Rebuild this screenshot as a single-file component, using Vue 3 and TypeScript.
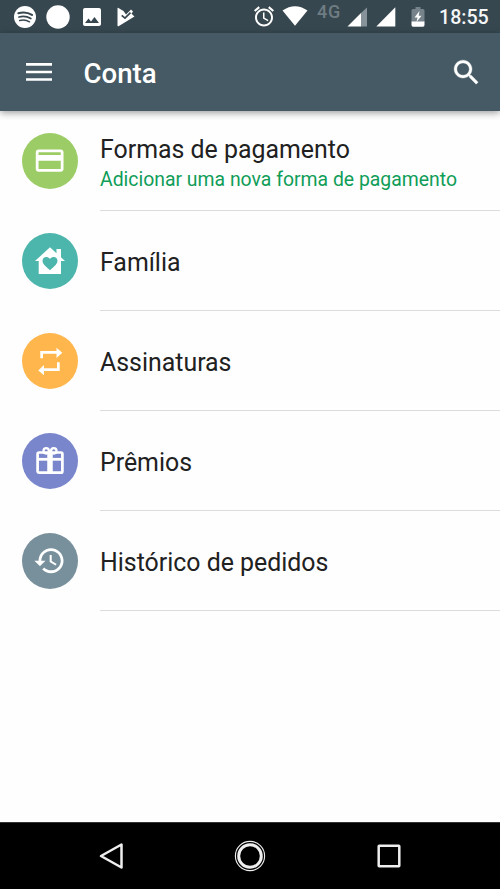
<script setup lang="ts">
type IconName = 'card' | 'family' | 'repeat' | 'gift' | 'history'

interface AccountItem {
  icon: IconName
  title: string
  subtitle?: string
}

const items: AccountItem[] = [
  { icon: 'card', title: 'Formas de pagamento', subtitle: 'Adicionar uma nova forma de pagamento' },
  { icon: 'family', title: 'Família' },
  { icon: 'repeat', title: 'Assinaturas' },
  { icon: 'gift', title: 'Prêmios' },
  { icon: 'history', title: 'Histórico de pedidos' },
]
</script>

<template>
  <div class="screen">
    <header class="status">
      <div class="notifications">
        <svg class="spotify" width="22" height="22" viewBox="0 0 22 22">
          <circle cx="11" cy="11" r="11" fill="#fff" />
          <g fill="none" stroke="#37474f" stroke-linecap="round">
            <path d="M4.3 7.3C9 6 14 6.5 18 8.9" stroke-width="2" />
            <path d="M5 11C9 10 13 10.3 16.8 12.5" stroke-width="1.8" />
            <path d="M5.7 14.5C9 13.7 12.5 14 15.5 15.8" stroke-width="1.5" />
          </g>
        </svg>
        <svg class="dot" width="24" height="24" viewBox="0 0 24 24"><circle cx="12" cy="12" r="11.7" fill="#fff" /></svg>
        <svg class="picture" width="18" height="18" viewBox="3 3 18 18">
          <path fill="#fff" d="M21 19V5c0-1.100-.9-2-2-2H5c-1.100 0-2 .9-2 2v14c0 1.100.9 2 2 2h14c1.100 0 2-.9 2-2zM8.500 13.500l2.500 3.010L14.500 12l4.500 6H5l3.500-4.500z" />
        </svg>
        <svg class="play" width="18" height="20" viewBox="0 0 18 20">
          <path fill="#fff" d="M1 .8 6.500 4 9 7.500 14 2.500 16 4.500 14.500 6.800 17.500 9.500 1.500 19.200Q.5 19.500.5 18.500V1.500Q.5.700 1 .8z" />
          <path fill="none" stroke="#37474f" stroke-width="1.700" d="M4.700 8.300 8 11.200 13.500 5.600" />
        </svg>
      </div>
      <div class="system">
        <svg class="alarm" width="20" height="21" viewBox="2 1.700 20 20.600">
          <path fill="#fff" d="M22 5.720l-4.600-3.860-1.290 1.530 4.600 3.860L22 5.720zM7.880 3.390L6.600 1.860 2 5.710l1.290 1.530 4.590-3.850zM12.500 8H11v6l4.750 2.850.75-1.230-4-2.370V8zM12 4c-4.970 0-9 4.030-9 9s4.020 9 9 9c4.970 0 9-4.030 9-9s-4.030-9-9-9zm0 16c-3.870 0-7-3.130-7-7s3.130-7 7-7 7 3.130 7 7-3.130 7-7 7z" />
        </svg>
        <svg class="wifi" width="26" height="20" viewBox="0 0 26 20"><path fill="#fff" d="M.5 4.500Q13-4 25.500 4.500L13 19.800z" /></svg>
        <span class="network">4G</span>
        <svg class="signal-one" width="20" height="20" viewBox="0 0 20 20">
          <path fill="#87929a" d="M14 6 20 .5V19.500H14z" /><path fill="#fff" d="M.5 19.500 14 6V19.500z" />
        </svg>
        <svg class="signal-two" width="20" height="20" viewBox="0 0 20 20"><path fill="#fff" d="M.3 19.500 19.300.3V19.500z" /></svg>
        <svg class="battery" width="14" height="20" viewBox="0 0 14 20">
          <path fill="#77838a" d="M4.500 0h5v2H12q1.500 0 1.500 1.500V15H.5V3.500Q.5 2 2 2h2.500z" />
          <path fill="#fff" d="M.5 14.500h13V18q0 1.700-1.500 1.700H2Q.5 19.700.5 18z" />
          <path fill="#fff" d="M8.500 4 3.500 10.500H6.500L5.500 15 10.500 8.800H7.700z" />
        </svg>
        <time class="clock">18:55</time>
      </div>
    </header>

    <div class="toolbar">
      <button class="menu" aria-label="Menu">
        <svg width="26" height="18" viewBox="0 0 26 18"><path stroke="#fff" stroke-width="2.700" d="M0 1.400H26M0 9H26M0 16.500H26" /></svg>
      </button>
      <h1>Conta</h1>
      <button class="search" aria-label="Buscar">
        <svg width="33" height="33" viewBox="0 0 24 24">
          <path fill="#fff" stroke="#fff" stroke-width=".25" d="M15.500 14h-.79l-.28-.27C15.410 12.590 16 11.110 16 9.500 16 5.910 13.090 3 9.500 3S3 5.910 3 9.500 5.910 16 9.500 16c1.610 0 3.090-.59 4.230-1.570l.27.28v.79l5 4.990L20.490 19l-4.990-5zm-6 0C7.010 14 5 11.990 5 9.500S7.010 5 9.500 5 14 7.010 14 9.500 11.990 14 9.500 14z" />
        </svg>
      </button>
    </div>

    <main class="list">
      <div v-for="item in items" :key="item.icon" class="row">
        <div class="badge" :class="item.icon">
          <svg v-if="item.icon === 'card'" width="33.300" height="33.300" viewBox="0 0 24 24">
            <path fill="#fff" d="M20 4H4c-1.110 0-1.990.89-1.990 2L2 18c0 1.110.89 2 2 2h16c1.110 0 2-.89 2-2V6c0-1.110-.89-2-2-2zm0 14H4v-6h16v6zm0-10H4V6h16v2z" />
          </svg>
          <svg v-else-if="item.icon === 'family'" width="32" height="30" viewBox="0 0 32 30">
            <path fill="#fff" d="M16 1.300 22.500 7.200V3H27V11.300L31 15H27V28H4.700V15H1z" />
            <path class="heart" d="M16 24.300C11.500 20.300 8.500 17.800 8.500 14.800C8.500 10.800 13.400 9.700 16 13.100C18.600 9.700 23.500 10.800 23.500 14.800C23.500 17.800 20.500 20.300 16 24.300z" />
          </svg>
          <svg v-else-if="item.icon === 'repeat'" width="30" height="30" viewBox="0 0 30 30">
            <path fill="#fff" d="M5.300 12.300V5H21.500V1.700L27.300 6.800 21.500 12V7.800H8V12.300zM24.700 16.300V25H9V29.300L3.300 24.500 9 19V22.300H22V16.300z" />
          </svg>
          <svg v-else-if="item.icon === 'gift'" width="30" height="30" viewBox="0 0 30 30">
            <g fill="none" stroke="#fff">
              <rect x="2.600" y="6.500" width="24.800" height="20.200" rx="1.500" stroke-width="2.700" />
              <circle cx="11.200" cy="4.800" r="2.700" stroke-width="2.300" />
              <circle cx="18.800" cy="4.800" r="2.700" stroke-width="2.300" />
              <path stroke-width="2.800" d="M2.500 13.300H27.500" />
              <path stroke-width="5.500" d="M15 6V27" />
            </g>
          </svg>
          <svg v-else width="33.300" height="33.300" viewBox="0.500 0 24 24">
            <path fill="#fff" d="M13.500 3c-4.970 0-9 4.030-9 9H1.500l3.890 3.890.07.14L9.500 12h-3c0-3.870 3.130-7 7-7s7 3.130 7 7-3.130 7-7 7c-1.930 0-3.680-.79-4.940-2.060l-1.420 1.420C8.770 19.990 11.010 21 13.500 21c4.970 0 9-4.030 9-9s-4.030-9-9-9zm-1 5v5l4.280 2.540.72-1.210-3.500-2.080V8h-1.500z" />
          </svg>
        </div>
        <div class="text">
          <span class="title">{{ item.title }}</span>
          <span v-if="item.subtitle" class="subtitle">{{ item.subtitle }}</span>
        </div>
      </div>
    </main>

    <nav class="navigation">
      <svg width="26" height="28" viewBox="0 0 26 28"><path fill="none" stroke="#eee" stroke-width="2.500" stroke-linejoin="round" d="M23.500 2.500V25.500L3 14z" /></svg>
      <svg width="32" height="32" viewBox="0 0 32 32">
        <circle cx="16" cy="16" r="14.600" fill="none" stroke="#eee" stroke-width="1.100" />
        <circle cx="16" cy="16" r="11.300" fill="none" stroke="#eee" stroke-width="3" />
      </svg>
      <svg width="26" height="26" viewBox="0 0 26 26"><rect x="2.700" y="2.700" width="20.600" height="20.600" rx=".5" fill="none" stroke="#eee" stroke-width="2.500" /></svg>
    </nav>
  </div>
</template>

<style>
body { margin: 0; background: #fff; }
</style>

<style scoped>
.screen {
  display: flex;
  flex-direction: column;
  width: 500px;
  height: 889px;
  overflow: hidden;
  background: #fefefe;
  font-family: Roboto, "Liberation Sans", sans-serif;
  color: #212121;
}
svg { display: block; flex: none; }
.status {
  display: flex;
  justify-content: space-between;
  box-sizing: border-box;
  height: 33px;
  flex: none;
  padding: 0 10px 0 14px;
  background: #37474f;
}
.notifications, .system { display: flex; align-items: flex-start; }
.spotify { margin-top: 6px; }
.dot { margin: 5px 0 0 10px; }
.picture { margin: 8px 0 0 13px; }
.play { margin: 7px 0 0 16px; }
.alarm { margin-top: 6px; }
.wifi { margin: 6px 0 0 8px; }
.network {
  width: 24px;
  margin: 3px 7px 0 9px;
  font-size: 18px;
  line-height: 18px;
  font-weight: 500;
  letter-spacing: 0.8px;
  color: #6f7c83;
}
.signal-one { margin: 7px 0 0 -1px; }
.signal-two { margin: 7px 0 0 9px; }
.battery { margin: 7px 0 0 15px; }
.clock {
  width: 51px;
  margin: 6px 0 0 14px;
  font-size: 19.6px;
  line-height: 24px;
  font-weight: 500;
  color: #f4f6f7;
  white-space: nowrap;
}
.toolbar {
  display: flex;
  align-items: center;
  box-sizing: border-box;
  height: 78px;
  flex: none;
  padding: 0 17px 0 26px;
  background: #455a64;
  box-shadow: 0 2px 7px rgba(0, 0, 0, 0.38);
  z-index: 1;
}
button { padding: 0; border: 0; background: none; }
h1 {
  flex: 1;
  margin: 4px 0 0 31.500px;
  font-size: 27.600px;
  line-height: 34px;
  font-weight: 500;
  color: #fff;
}
.list { flex: 1; }
.row { display: flex; height: 100px; padding-left: 22px; }
.badge {
  display: flex;
  align-items: center;
  justify-content: center;
  width: 56px;
  height: 56px;
  flex: none;
  margin: 22px 22px 0 0;
  border-radius: 50%;
}
.card { background: #9ccc65; }
.family { background: #4db6ac; }
.heart { fill: #4db6ac; }
.repeat { background: #ffb74d; }
.gift { background: #7986cb; }
.history { background: #78909c; }
.text {
  display: flex;
  flex: 1;
  flex-direction: column;
  justify-content: center;
  box-sizing: border-box;
  height: 100px;
  padding-top: 5px;
  border-bottom: 1px solid #dcdcdc;
}
.title { font-size: 24.900px; line-height: 32px; white-space: nowrap; }
.subtitle { margin-bottom: -1px; font-size: 19.400px; line-height: 28px; color: #0f9d58; white-space: nowrap; }
.navigation {
  display: flex;
  align-items: center;
  justify-content: space-between;
  box-sizing: border-box;
  height: 67px;
  flex: none;
  padding: 0 98px 0 98px;
  border-top: 1px solid #333;
  background: #000;
}
</style>
